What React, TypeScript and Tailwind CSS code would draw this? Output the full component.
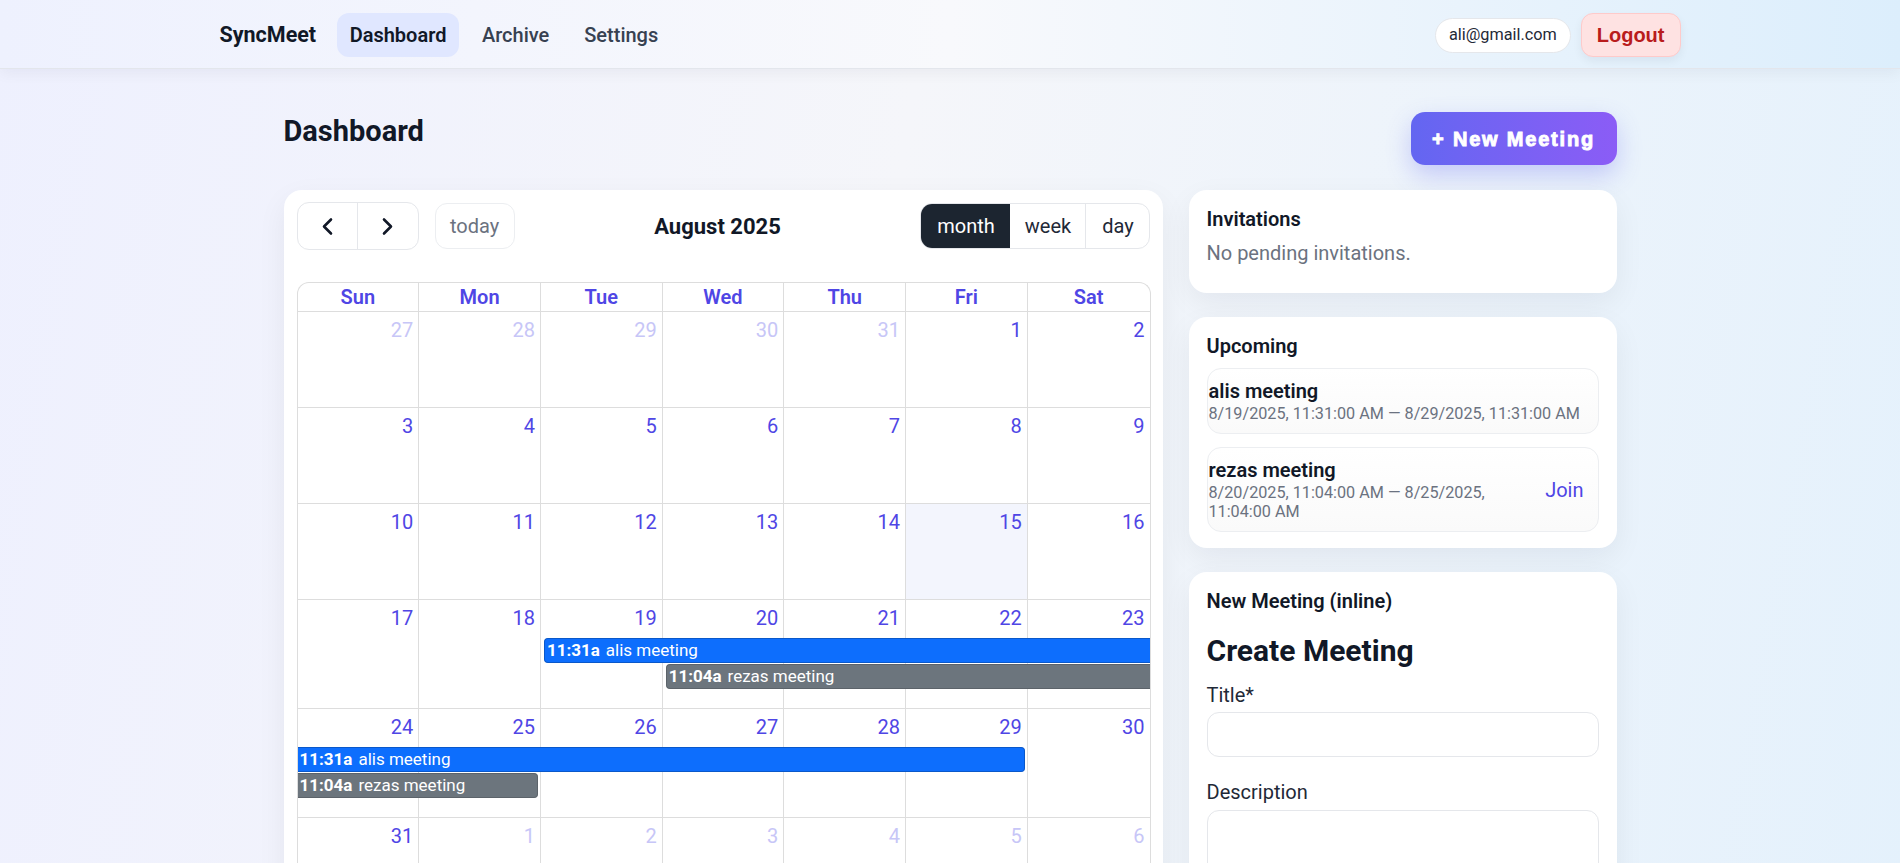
import React from 'react';

type Day = { n: number; other?: boolean; today?: boolean };
type Ev = { time: string; title: string; cls: string };

const colStart = ['col-start-1', 'col-start-2', 'col-start-3', 'col-start-4', 'col-start-5', 'col-start-6', 'col-start-7'];

const blue = 'bg-[#0d6efd] border-[#0a58ca]';
const gray = 'bg-[#6c757d] border-[#5c636a]';

const mk = (nums: number[], other: (n: number, i: number) => boolean, today?: number): Day[] =>
  nums.map((n, i) => ({ n, other: other(n, i), today: n === today }));

const weeks: { days: Day[]; tall?: boolean; events?: Ev[] }[] = [
  { days: mk([27, 28, 29, 30, 31, 1, 2], (_, i) => i < 5) },
  { days: mk([3, 4, 5, 6, 7, 8, 9], () => false) },
  { days: mk([10, 11, 12, 13, 14, 15, 16], () => false, 15) },
  {
    days: mk([17, 18, 19, 20, 21, 22, 23], () => false),
    tall: true,
    events: [
      { time: '11:31a', title: 'alis meeting', cls: `row-start-2 col-start-3 col-end-8 ml-[3px] rounded-l-[4px] border-r-0 ${blue}` },
      { time: '11:04a', title: 'rezas meeting', cls: `row-start-3 col-start-4 col-end-8 ml-[3px] rounded-l-[4px] border-r-0 ${gray}` },
    ],
  },
  {
    days: mk([24, 25, 26, 27, 28, 29, 30], () => false),
    tall: true,
    events: [
      { time: '11:31a', title: 'alis meeting', cls: `row-start-2 col-start-1 col-end-7 mr-[3px] rounded-r-[4px] border-l-0 ${blue}` },
      { time: '11:04a', title: 'rezas meeting', cls: `row-start-3 col-start-1 col-end-3 mr-[3px] rounded-r-[4px] border-l-0 ${gray}` },
    ],
  },
  { days: mk([31, 1, 2, 3, 4, 5, 6], (_, i) => i > 0) },
];

const dows = ['Sun', 'Mon', 'Tue', 'Wed', 'Thu', 'Fri', 'Sat'];

const Chevron = ({ dir }: { dir: 'l' | 'r' }) => (
  <svg width="13" height="19" viewBox="0 0 13 19" fill="none" stroke="#111827" strokeWidth="2.6" strokeLinecap="round" strokeLinejoin="round">
    {dir === 'l' ? <polyline points="10,2.5 3,9.5 10,16.5" /> : <polyline points="3,2.5 10,9.5 3,16.5" />}
  </svg>
);

const Calendar = () => (
  <div className="flex-1 bg-white rounded-[18px] shadow-[0_10px_30px_rgba(15,23,42,0.06)] pl-[13px] pr-[12px] pt-[12px] pb-6">
    {/* toolbar */}
    <div className="flex items-center justify-between h-[48px]">
      <div className="flex items-center gap-4">
        <div className="flex h-[48px] border border-[#e5e7eb] rounded-xl overflow-hidden bg-white">
          <button className="w-[60px] flex items-center justify-center border-r border-[#e5e7eb]">
            <Chevron dir="l" />
          </button>
          <button className="w-[60px] flex items-center justify-center">
            <Chevron dir="r" />
          </button>
        </div>
        <button className="h-[46px] w-[80px] border border-[#eceef1] rounded-xl text-[20px] text-[#6b7280]">today</button>
      </div>
      <h2 className="text-[22px] font-bold text-[#111827]">August 2025</h2>
      <div className="flex h-[46px] border border-[#e5e7eb] rounded-xl overflow-hidden text-[20px] text-[#1f2937]">
        <button className="w-[89px] bg-[#1c2530] text-white">month</button>
        <button className="w-[76px] border-r border-[#e5e7eb]">week</button>
        <button className="w-[63px]">day</button>
      </div>
    </div>

    {/* grid */}
    <div className="mt-[32px] border border-b-0 border-[#dddddd] rounded-t-[12px] overflow-hidden">
      <div className="grid grid-cols-7">
        {dows.map((d, i) => (
          <div
            key={d}
            className={`h-[29px] border-b border-[#dddddd] text-center text-[20px] leading-[28px] font-semibold text-[#4f46e5] ${i < 6 ? 'border-r' : ''}`}
          >
            {d}
          </div>
        ))}
      </div>
      {weeks.map((w, wi) => (
        <div key={wi} className={`grid grid-cols-7 grid-rows-[38px_26px_26px_1fr] ${w.tall ? 'h-[109px]' : 'h-[96px]'}`}>
          {w.days.map((d, i) => (
            <div
              key={i}
              className={`${colStart[i]} row-start-1 row-end-5 border-b border-[#dddddd] ${i < 6 ? 'border-r' : ''} ${d.today ? 'bg-[#f3f5fd]' : ''}`}
            >
              <div className={`text-right pr-[5px] pt-[4px] text-[20px] leading-[28px] ${d.other ? 'text-[#c7c6f7]' : 'text-[#4f46e5]'}`}>{d.n}</div>
            </div>
          ))}
          {w.events?.map((e, ei) => (
            <div
              key={ei}
              className={`${e.cls} h-[25px] border text-white text-[17px] leading-[23px] px-[2px] whitespace-nowrap overflow-hidden z-10`}
            >
              <span className="font-bold">{e.time}</span>
              <span className="ml-[6px]">{e.title}</span>
            </div>
          ))}
        </div>
      ))}
    </div>
  </div>
);

const Card = ({ children, className = '' }: { children: React.ReactNode; className?: string }) => (
  <div className={`bg-white rounded-[18px] shadow-[0_10px_30px_rgba(15,23,42,0.06)] px-[18px] ${className}`}>{children}</div>
);

const Sidebar = () => (
  <div className="w-[428px] flex flex-col gap-6">
    <Card className="pt-[15px] pb-[26px]">
      <h3 className="text-[20px] leading-[28px] font-semibold text-[#111827]">Invitations</h3>
      <p className="mt-[6px] text-[20px] leading-[28px] text-[#6b7280]">No pending invitations.</p>
    </Card>

    <Card className="pt-[15px] pb-[16px]">
      <h3 className="text-[20px] leading-[28px] font-semibold text-[#111827]">Upcoming</h3>
      <div className="mt-2 flex flex-col gap-[13px]">
        <div className="border border-[#eceef1] rounded-[14px] bg-gradient-to-b from-white to-[#fafafa] py-[10px] pl-[1px] pr-[12px]">
          <div className="text-[20px] leading-[25px] font-semibold text-[#111827]">alis meeting</div>
          <div className="text-[16.2px] leading-[19px] text-[#6b7280] whitespace-nowrap">8/19/2025, 11:31:00 AM — 8/29/2025, 11:31:00 AM</div>
        </div>
        <div className="border border-[#eceef1] rounded-[14px] bg-gradient-to-b from-white to-[#fafafa] py-[10px] pl-[1px] pr-[14px] flex items-center gap-4">
          <div className="flex-1">
            <div className="text-[20px] leading-[25px] font-semibold text-[#111827]">rezas meeting</div>
            <div className="text-[16.2px] leading-[19px] text-[#6b7280]">8/20/2025, 11:04:00 AM — 8/25/2025, 11:04:00 AM</div>
          </div>
          <button className="text-[20px] text-[#4f46e5]">Join</button>
        </div>
      </div>
    </Card>

    <Card className="pt-[15px] pb-8">
      <h3 className="text-[20px] leading-[28px] font-semibold text-[#111827]">New Meeting (inline)</h3>
      <h2 className="mt-[18px] text-[30px] leading-[36px] font-bold text-[#111827]">Create Meeting</h2>
      <label className="block mt-[12px] text-[20px] leading-[28px] text-[#1f2937]">Title*</label>
      <input className="mt-[3px] w-full h-[45px] border border-[#e5e7eb] rounded-xl px-3 outline-none" />
      <label className="block mt-[21px] text-[20px] leading-[28px] text-[#1f2937]">Description</label>
      <textarea className="mt-1 w-full h-[100px] border border-[#e5e7eb] rounded-xl px-3 outline-none resize-none" />
    </Card>
  </div>
);

export default function App() {
  return (
    <div className="min-h-screen [font-family:Roboto,'Noto_Sans',sans-serif] bg-[linear-gradient(100deg,#eef0fe_0%,#f5f6fa_45%,#e4f1fc_100%)]">
      <nav className="h-[69px] bg-[linear-gradient(90deg,#eef1fe_0%,#f8f9fc_50%,#dceefc_100%)] border-b border-[#e3e6ec] shadow-[0_4px_14px_rgba(15,23,42,0.05)]">
        <div className="max-w-[1461px] mx-auto h-full pt-[2px] flex items-center justify-between">
          <div className="flex items-center">
            <span className="text-[21.5px] font-bold text-[#111827] mr-[21px]">SyncMeet</span>
            <div className="flex items-center gap-[11px]">
              <a className="px-[12.5px] h-[44px] flex items-center rounded-xl bg-[#e0e7ff] text-[20px] font-semibold text-[#111827]">Dashboard</a>
              <a className="px-[12px] h-[44px] flex items-center rounded-xl text-[20px] font-medium text-[#374151]">Archive</a>
              <a className="px-[12px] h-[44px] flex items-center rounded-xl text-[20px] font-medium text-[#374151]">Settings</a>
            </div>
          </div>
          <div className="flex items-center gap-[10px]">
            <span className="h-[35px] px-[13px] flex items-center rounded-full bg-white border border-[#e5e7eb] text-[16.25px] text-[#1f2937]">ali@gmail.com</span>
            <button className="h-[44px] px-[15px] rounded-xl bg-[#fee2e2] border border-[#fecaca] text-[20px] font-bold text-[#b91c1c] [font-family:'Liberation_Sans',Arial,sans-serif] shadow-[0_4px_10px_rgba(15,23,42,0.06)]">
              Logout
            </button>
          </div>
        </div>
      </nav>

      <main className="max-w-[1333px] mx-auto pt-[43px]">
        <div className="flex items-start justify-between mb-[25px]">
          <h1 className="text-[29px] leading-[36px] font-bold text-[#111827] mt-[1px]">Dashboard</h1>
          <button className="h-[53px] w-[206px] rounded-[14px] bg-gradient-to-r from-[#6366f1] to-[#8b5cf6] text-white text-[20px] font-bold tracking-[1.8px] [font-family:'Liberation_Sans',Arial,sans-serif] [-webkit-text-stroke:0.9px_white] shadow-[0_10px_24px_rgba(99,102,241,0.3)]">
            + New Meeting
          </button>
        </div>
        <div className="flex items-start gap-[26px]">
          <Calendar />
          <Sidebar />
        </div>
      </main>
    </div>
  );
}
